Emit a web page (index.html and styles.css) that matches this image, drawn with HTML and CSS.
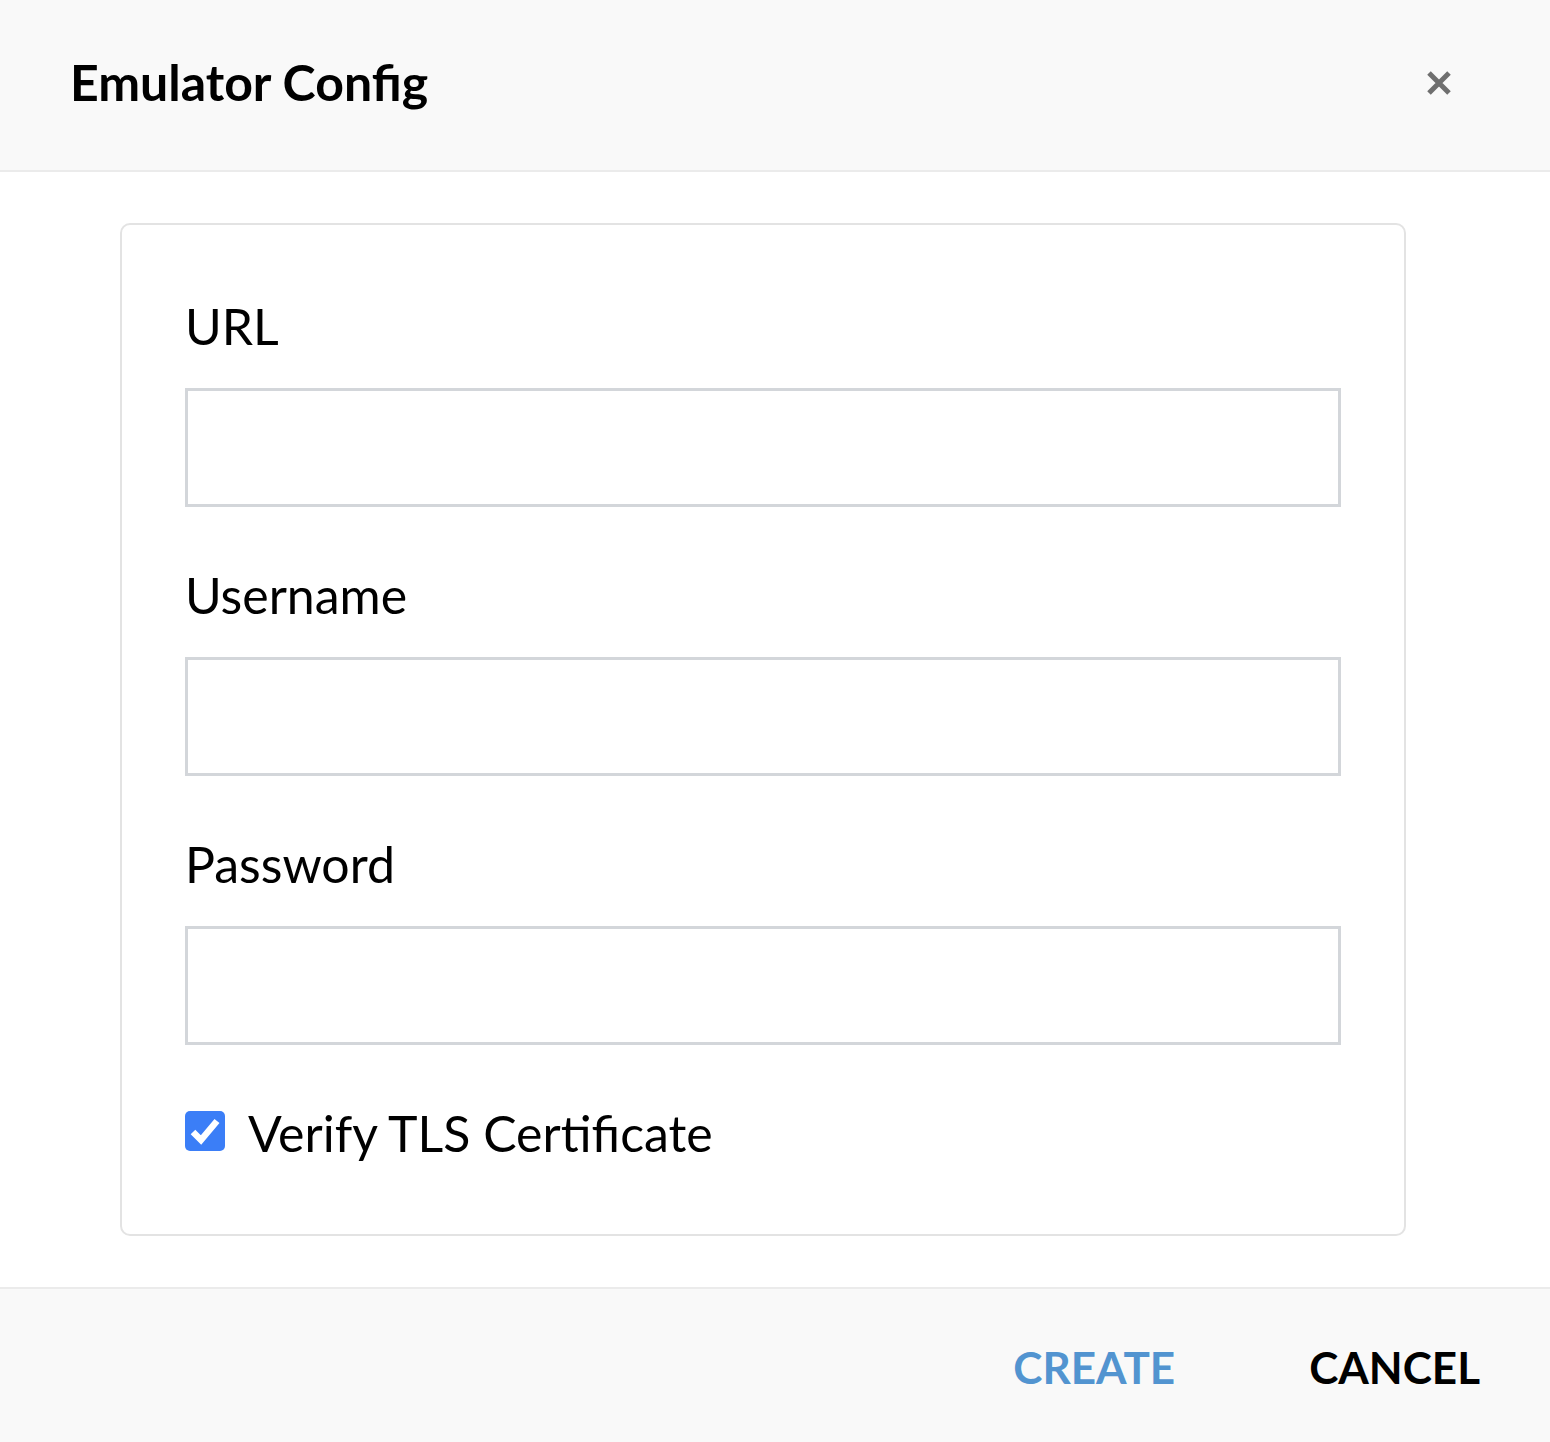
FILE: index.html
```html
<!DOCTYPE html>
<html>
<head>
<meta charset="utf-8">
<link rel="stylesheet" href="styles.css">
</head>
<body>
<div class="dialog">
  <header class="dlg-header">
    <h1 class="dlg-title">Emulator Config</h1>
    <button class="dlg-close" aria-label="Close">
      <svg width="26" height="26" viewBox="0 0 26 26"><path d="M3 3 L23 23 M23 3 L3 23" stroke="#6f6f6f" stroke-width="5" stroke-linecap="butt"/></svg>
    </button>
  </header>
  <main class="dlg-body">
    <div class="card">
      <label class="field-label">URL</label>
      <input class="field-input" type="text">
      <label class="field-label">Username</label>
      <input class="field-input" type="text">
      <label class="field-label">Password</label>
      <input class="field-input" type="password">
      <div class="check-row">
        <span class="checkbox">
          <svg width="40" height="40" viewBox="0 0 40 40"><path d="M8 21 L16 29 L32 10" fill="none" stroke="#fff" stroke-width="6.5"/></svg>
        </span>
        <span class="check-label">Verify TLS Certificate</span>
      </div>
    </div>
  </main>
  <footer class="dlg-footer">
    <button class="btn btn-create">CREATE</button>
    <button class="btn btn-cancel">CANCEL</button>
  </footer>
</div>
</body>
</html>
```

FILE: styles.css
```css
* { box-sizing: border-box; }
html, body { margin: 0; padding: 0; background: #fff; }
body { font-family: Lato, "Open Sans", sans-serif; color: #000; width: 1550px; height: 1442px; overflow: hidden; }
.dialog { display: flex; flex-direction: column; height: 1442px; }
.dlg-header {
  height: 172px;
  background: #f9f9f9;
  border-bottom: 2px solid #ebebeb;
  display: flex;
  align-items: center;
  justify-content: space-between;
  padding: 0 98px 0 70px;
}
.dlg-title { margin: 0; font-size: 50px; font-weight: 700; line-height: 1; padding-bottom: 6px; }
.dlg-close { background: none; border: 0; padding: 0; width: 26px; height: 26px; display: flex; margin-top: -4px; }
.dlg-body { padding: 51px 144px 51px 120px; }
.card {
  border: 2px solid #e3e3e3;
  border-radius: 10px;
  padding: 71px 63px 71px 63px;
  display: flex;
  flex-direction: column;
}
.field-label { font-size: 50px; line-height: 60px; display: block; margin-bottom: 32px; }
.field-input {
  height: 119px;
  border: 3px solid #d3d6da;
  width: 100%;
  margin: 0 0 58px 0;
  font-size: 32px;
  background: #fff;
}
.check-row { display: flex; align-items: center; margin-top: 0; }
.checkbox {
  width: 40px; height: 40px;
  background: #3b7ef7;
  border-radius: 5px;
  display: flex;
  flex-shrink: 0;
  margin-bottom: 4px;
}
.check-label { font-size: 50px; line-height: 60px; margin-left: 23px; }
.dlg-footer {
  flex: 1;
  background: #f9f9f9;
  border-top: 2px solid #ebebeb;
  display: flex;
  justify-content: flex-end;
  align-items: center;
  padding: 2px 70px 0 0;
  gap: 134px;
}
.btn { background: none; border: 0; padding: 0; font-family: Lato, sans-serif; font-weight: 700; font-size: 44px; letter-spacing: 0; }
.btn-create { color: #5294d0; }
.btn-cancel { color: #000; }
```
